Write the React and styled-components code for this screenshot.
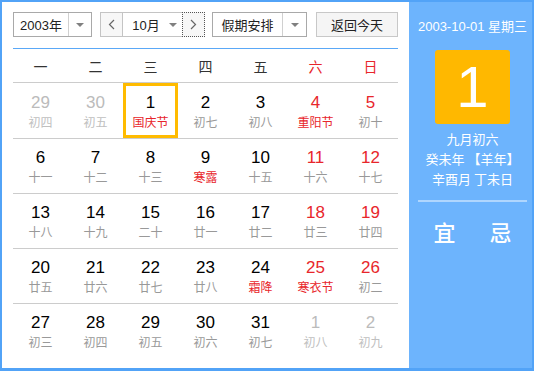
import React from "react";
import styled, { createGlobalStyle, css } from "styled-components";

const Global = createGlobalStyle`
  html, body { margin: 0; padding: 0; background: #fff; }
  * { box-sizing: border-box; }
`;

const FONT = `"Liberation Sans", Arial, "Noto Sans CJK SC", sans-serif`;

const Frame = styled.div`
  width: 534px;
  height: 371px;
  border: 2px solid #52a3f7;
  border-bottom-width: 3px;
  display: flex;
  font-family: ${FONT};
  overflow: hidden;
`;

const Main = styled.div`
  width: 407px;
  padding: 10px 11px 0 11px;
  background: #fff;
`;

const Toolbar = styled.div`
  display: flex;
  height: 25px;
  align-items: stretch;
`;

const SelectBox = styled.div`
  display: flex;
  width: ${(p) => p.$w}px;
  margin-left: ${(p) => p.$ml || 0}px;
  border: 1px solid #a9a9a9;
  background: #fff;
  font-size: 13px;
  color: #222;
  font-family: ${(p) => (p.$cjk ? `"Noto Sans CJK SC", sans-serif` : FONT)};
`;

const SelectLabel = styled.div`
  flex: 1;
  display: flex;
  align-items: center;
  justify-content: center;
`;

const SelectArrow = styled.div`
  width: ${(p) => p.$w}px;
  border-left: 1px solid #d0d0d0;
  display: flex;
  align-items: center;
  justify-content: center;
`;

const Tri = styled.span`
  width: 0;
  height: 0;
  border-left: 4px solid transparent;
  border-right: 4px solid transparent;
  border-top: 4px solid #808080;
`;

const MonthGroup = styled.div`
  display: flex;
  margin-left: 8px;
  width: 105px;
  font-size: 13px;
  color: #222;
`;

const NavBtn = styled.div`
  width: ${(p) => p.$w}px;
  display: flex;
  align-items: center;
  justify-content: center;
  background: #f7f7f7;
  ${(p) =>
    p.$focus
      ? css`
          border: 1px dotted #555;
        `
      : css`
          border: 1px solid #c4c4c4;
          border-right: none;
        `}
`;

const MonthSel = styled.div`
  flex: 1;
  display: flex;
  align-items: center;
  justify-content: center;
  gap: 9px;
  border-top: 1px solid #c4c4c4;
  border-bottom: 1px solid #c4c4c4;
  border-left: 1px solid #c4c4c4;
  background: #fff;
  padding-left: 4px;
`;

const TodayBtn = styled.div`
  margin-left: 9px;
  width: 82px;
  border: 1px solid #c8c8c8;
  background: #f5f5f5;
  display: flex;
  align-items: center;
  justify-content: center;
  font-size: 13px;
  color: #222;
  font-family: "Noto Sans CJK SC", sans-serif;
`;

const WeekHeader = styled.div`
  margin-top: 11px;
  border-top: 1px solid #5aa8f7;
  border-bottom: 1px solid #cccccc;
  height: 35px;
  display: grid;
  grid-template-columns: repeat(7, 55px);
  align-items: center;
`;

const WeekDay = styled.div`
  text-align: center;
  font-size: 14px;
  font-family: "Noto Sans CJK SC", sans-serif;
  color: ${(p) => (p.$weekend ? "#e8262b" : "#333")};
`;

const Row = styled.div`
  display: grid;
  grid-template-columns: repeat(7, 55px);
  height: 55px;
  border-top: ${(p) => (p.$first ? "none" : "1px solid #cccccc")};
`;

const Cell = styled.div`
  display: flex;
  flex-direction: column;
  align-items: center;
  padding-top: ${(p) => (p.$first ? 10 : 9)}px;
  ${(p) =>
    p.$selected &&
    css`
      box-shadow: inset 0 0 0 3px #ffbb00;
    `}
`;

const DayNum = styled.div`
  font-size: 17px;
  line-height: 20px;
  font-family: ${FONT};
  color: ${(p) => (p.$other ? "#bbbbbb" : p.$weekend ? "#e8262b" : "#000")};
`;

const Lunar = styled.div`
  margin-top: 1px;
  font-size: 12px;
  line-height: 16px;
  font-family: "Noto Sans CJK SC", sans-serif;
  color: ${(p) => (p.$other ? "#c0c0c0" : p.$fest ? "#e8262b" : "#999")};
`;

const Side = styled.div`
  flex: 1;
  background: #6db4fd;
  display: flex;
  flex-direction: column;
  align-items: center;
  padding-top: 17px;
  color: #fff;
  font-family: ${FONT};
`;

const SideDate = styled.div`
  font-size: 13px;
  line-height: 16px;
  white-space: nowrap;
  margin-left: 4px;
`;

const BigBox = styled.div`
  margin-top: 15px;
  width: 75px;
  height: 74px;
  border-radius: 3px;
  background: #ffb800;
  display: flex;
  align-items: center;
  justify-content: center;
  font-size: 58px;
  font-weight: 400;
  font-family: "Liberation Sans", Arial, sans-serif;
  line-height: 1;
  margin-left: 4px;
`;

const InfoLines = styled.div`
  margin-top: 5px;
  font-size: 13px;
  line-height: 20px;
  text-align: center;
  font-family: "Noto Sans CJK SC", sans-serif;
  margin-left: 4px;
`;

const Divider = styled.div`
  margin-top: 11px;
  width: 109px;
  height: 2px;
  margin-left: 4px;
  background: rgba(255, 255, 255, 0.45);
`;

const YiJi = styled.div`
  margin-top: 16px;
  display: flex;
  gap: 34px;
  font-size: 22px;
  line-height: 26px;
  font-weight: 500;
  font-family: "Noto Sans CJK SC", sans-serif;
  margin-left: 4px;
`;

const Chevron = ({ dir }) => (
  <svg width="7" height="11" viewBox="0 0 7 11">
    <polyline
      points={dir === "left" ? "6,1 1.5,5.5 6,10" : "1,1 5.5,5.5 1,10"}
      fill="none"
      stroke="#666"
      strokeWidth="1.2"
    />
  </svg>
);

const weeks = [
  [
    ["29", "初四", 0, 1],
    ["30", "初五", 0, 1],
    ["1", "国庆节", 1, 0, 1],
    ["2", "初七"],
    ["3", "初八"],
    ["4", "重阳节", 1],
    ["5", "初十"],
  ],
  [
    ["6", "十一"],
    ["7", "十二"],
    ["8", "十三"],
    ["9", "寒露", 1],
    ["10", "十五"],
    ["11", "十六"],
    ["12", "十七"],
  ],
  [
    ["13", "十八"],
    ["14", "十九"],
    ["15", "二十"],
    ["16", "廿一"],
    ["17", "廿二"],
    ["18", "廿三"],
    ["19", "廿四"],
  ],
  [
    ["20", "廿五"],
    ["21", "廿六"],
    ["22", "廿七"],
    ["23", "廿八"],
    ["24", "霜降", 1],
    ["25", "寒衣节", 1],
    ["26", "初二"],
  ],
  [
    ["27", "初三"],
    ["28", "初四"],
    ["29", "初五"],
    ["30", "初六"],
    ["31", "初七"],
    ["1", "初八", 0, 1],
    ["2", "初九", 0, 1],
  ],
];

const dayNames = ["一", "二", "三", "四", "五", "六", "日"];

export default function App() {
  return (
    <>
      <Global />
      <Frame>
        <Main>
          <Toolbar>
            <SelectBox $w={79}>
              <SelectLabel>2003年</SelectLabel>
              <SelectArrow $w={23}>
                <Tri />
              </SelectArrow>
            </SelectBox>
            <MonthGroup>
              <NavBtn $w={22}>
                <Chevron dir="left" />
              </NavBtn>
              <MonthSel>
                <span>10月</span>
                <Tri />
              </MonthSel>
              <NavBtn $w={23} $focus>
                <Chevron dir="right" />
              </NavBtn>
            </MonthGroup>
            <SelectBox $w={95} $ml={7} $cjk>
              <SelectLabel>假期安排</SelectLabel>
              <SelectArrow $w={24}>
                <Tri />
              </SelectArrow>
            </SelectBox>
            <TodayBtn>返回今天</TodayBtn>
          </Toolbar>
          <WeekHeader>
            {dayNames.map((d, i) => (
              <WeekDay key={d} $weekend={i >= 5}>
                {d}
              </WeekDay>
            ))}
          </WeekHeader>
          {weeks.map((w, ri) => (
            <Row key={ri} $first={ri === 0}>
              {w.map(([n, l, fest, other, sel], ci) => (
                <Cell key={ci} $selected={!!sel} $first={ri === 0}>
                  <DayNum $other={!!other} $weekend={ci >= 5}>
                    {n}
                  </DayNum>
                  <Lunar $other={!!other} $fest={!!fest}>
                    {l}
                  </Lunar>
                </Cell>
              ))}
            </Row>
          ))}
        </Main>
        <Side>
          <SideDate>2003-10-01 星期三</SideDate>
          <BigBox>1</BigBox>
          <InfoLines>
            <div>九月初六</div>
            <div>癸未年 【羊年】</div>
            <div>辛酉月 丁未日</div>
          </InfoLines>
          <Divider />
          <YiJi>
            <span>宜</span>
            <span>忌</span>
          </YiJi>
        </Side>
      </Frame>
    </>
  );
}
